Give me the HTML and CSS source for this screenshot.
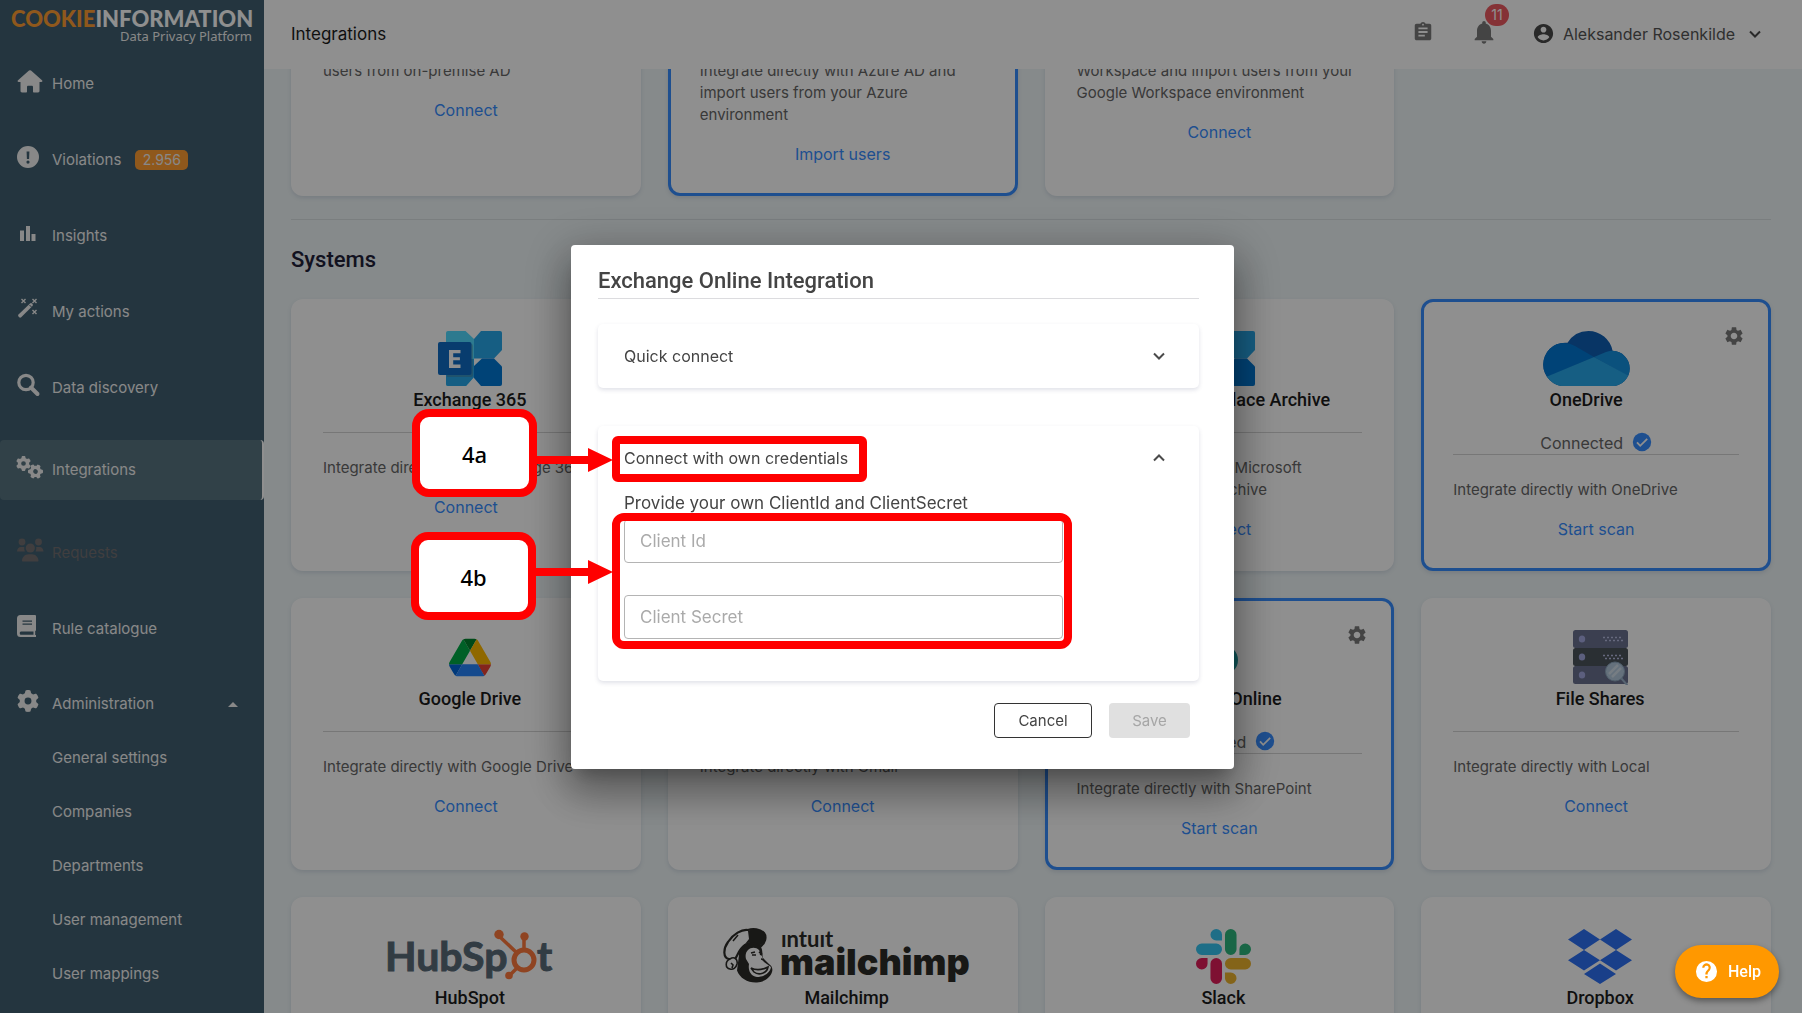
FILE: index.html
```html
<!DOCTYPE html>
<html lang="en">
<head>
<meta charset="utf-8">
<meta name="viewport" content="width=device-width, initial-scale=1">
<title>Integrations - Data Privacy Platform</title>
<link rel="stylesheet" href="styles.css">
</head>
<body>
<svg class="sprite" aria-hidden="true">
  <symbol id="i-gear" viewBox="0 0 512 512"><path d="M495.9 166.6c3.2 8.7 .5 18.4-6.4 24.6l-43.3 39.4c1.1 8.3 1.7 16.8 1.7 25.4s-.6 17.1-1.7 25.4l43.3 39.4c6.9 6.2 9.6 15.9 6.4 24.6c-4.4 11.9-9.7 23.3-15.8 34.3l-4.7 8.1c-6.6 11-14 21.4-22.1 31.2c-5.9 7.2-15.7 9.6-24.5 6.8l-55.7-17.7c-13.4 10.3-28.2 18.9-44 25.4l-12.5 57.1c-2 9.1-9 16.3-18.2 17.8c-13.8 2.3-28 3.5-42.5 3.5s-28.7-1.2-42.5-3.5c-9.2-1.5-16.2-8.7-18.2-17.8l-12.5-57.1c-15.8-6.5-30.6-15.1-44-25.4L83.1 425.9c-8.8 2.8-18.6 .3-24.5-6.8c-8.1-9.8-15.5-20.2-22.1-31.2l-4.7-8.1c-6.1-11-11.4-22.4-15.8-34.3c-3.2-8.7-.5-18.4 6.4-24.6l43.3-39.4C64.6 273.1 64 264.6 64 256s.6-17.1 1.7-25.4L22.4 191.2c-6.9-6.2-9.6-15.9-6.4-24.6c4.4-11.9 9.7-23.3 15.8-34.3l4.7-8.1c6.6-11 14-21.4 22.1-31.2c5.9-7.2 15.7-9.6 24.5-6.8l55.7 17.7c13.4-10.3 28.2-18.9 44-25.4l12.5-57.1c2-9.1 9-16.3 18.2-17.8C227.3 1.2 241.5 0 256 0s28.7 1.2 42.5 3.5c9.2 1.5 16.2 8.7 18.2 17.8l12.5 57.1c15.8 6.5 30.6 15.1 44 25.4l55.7-17.7c8.8-2.8 18.6-.3 24.5 6.8c8.1 9.8 15.5 20.2 22.1 31.2l4.7 8.1c6.1 11 11.4 22.4 15.8 34.3zM256 336a80 80 0 1 0 0-160 80 80 0 1 0 0 160z"/></symbol>
  <symbol id="i-settings" viewBox="0 0 24 24"><path d="M19.14 12.94c.04-.3.06-.61.06-.94 0-.32-.02-.64-.07-.94l2.03-1.58c.18-.14.23-.41.12-.61l-1.92-3.32c-.12-.22-.37-.29-.59-.22l-2.39.96c-.5-.38-1.03-.7-1.62-.94l-.36-2.54c-.04-.24-.24-.41-.48-.41h-3.84c-.24 0-.43.17-.47.41l-.36 2.54c-.59.24-1.13.57-1.62.94l-2.39-.96c-.22-.08-.47 0-.59.22L2.74 8.87c-.12.21-.08.47.12.61l2.03 1.58c-.05.3-.09.63-.09.94s.02.64.07.94l-2.03 1.58c-.18.14-.23.41-.12.61l1.92 3.32c.12.22.37.29.59.22l2.39-.96c.5.38 1.03.7 1.62.94l.36 2.54c.05.24.24.41.48.41h3.84c.24 0 .44-.17.47-.41l.36-2.54c.59-.24 1.13-.56 1.62-.94l2.39.96c.22.08.47 0 .59-.22l1.92-3.32c.12-.22.07-.47-.12-.61l-2.01-1.58zM12 15.6c-1.98 0-3.6-1.62-3.6-3.6s1.62-3.6 3.6-3.6 3.6 1.62 3.6 3.6-1.62 3.6-3.6 3.6z"/></symbol>
  <symbol id="i-check" viewBox="0 0 20 20"><circle cx="10" cy="10" r="9.2"/><path d="M5 10.4l3.2 3.4 7-7" fill="none" stroke="#fff" stroke-width="1.8"/></symbol>
  <symbol id="i-down" viewBox="0 0 14 14"><path d="M2 4.500l5 5 5-5" fill="none" stroke="currentColor" stroke-width="2"/></symbol>
  <symbol id="i-up" viewBox="0 0 14 14"><path d="M2 9.500l5-5 5 5" fill="none" stroke="currentColor" stroke-width="2"/></symbol>
  <symbol id="i-exchange" viewBox="0 0 64 55">
    <path d="M10 0h17.500L36 8v38l-8 9H10a2 2 0 0 1-2-2V2a2 2 0 0 1 2-2z" fill="#50d9ff"/>
    <path d="M8 28h28v18l-8 9H10a2 2 0 0 1-2-2z" fill="#28a8ea"/>
    <path d="M43 0h19a2 2 0 0 1 2 2v17l-8 8.500H36V8z" fill="#28a8ea"/>
    <path d="M44 27.500h12l8 8V53a2 2 0 0 1-2 2H43l-7-8V35z" fill="#0078d4"/>
    <path d="M9 13h24a2 2 0 0 1 2 2v29a2 2 0 0 1-2 2H9z" opacity=".3"/>
    <rect y="11" width="33.500" height="33" rx="2" fill="#0f6cc4"/>
    <path d="M11 19h11.500v3.200h-7.300v4h6.700v3h-6.700v4.400h7.300V37H11z" fill="#fff"/>
  </symbol>
</svg>

<div class="app">
  <nav class="sidebar" aria-label="Main">
    <div class="brand">
      <div class="brand-name"><span class="brand-accent">COOKIE</span>INFORMATION</div>
      <div class="brand-sub">Data Privacy Platform</div>
    </div>
    <a class="nav-item" href="#"><svg class="nav-icon" viewBox="0 0 26 24"><path d="M13 1.200a1.500 1.500 0 0 1 1 .4L25 11.300c.8.8.4 1.700-.7 1.700H22.500v9c0 .8-.6 1.400-1.400 1.400H17c-.6 0-1-.4-1-1V18c0-.8-.6-1.300-1.300-1.300h-3.400c-.7 0-1.300.5-1.300 1.300v4.400c0 .6-.4 1-1 1H5c-.9 0-1.500-.6-1.500-1.400v-9H1.700c-1.100 0-1.500-.9-.7-1.700L12 1.600a1.500 1.500 0 0 1 1-.4z"/></svg>Home</a>
    <a class="nav-item" href="#"><svg class="nav-icon" viewBox="0 0 26 24"><path d="M11 1a11 11 0 1 0 0 22 11 11 0 0 0 0-22zM9.600 6.500h2.800l-.3 7.500H9.900zM11 15.500a1.600 1.600 0 1 1 0 3.200 1.600 1.600 0 0 1 0-3.200z"/></svg>Violations<span class="count">2.956</span></a>
    <a class="nav-item" href="#"><svg class="nav-icon" viewBox="0 0 26 24"><path d="M3 9.500h4V20H3zM9 5h4v15H9zM14.500 13h4v7h-4z"/></svg>Insights</a>
    <a class="nav-item" href="#"><svg class="nav-icon" viewBox="0 0 26 24"><path d="M13 6.500a1.500 1.500 0 0 1 2 0l.5.500a1.500 1.500 0 0 1 0 2L4.200 20.300a1.500 1.500 0 0 1-2 0l-.7-.7a1.500 1.500 0 0 1 0-2z"/><path d="M12.500 8l2 2" stroke="#405f70" stroke-width="1"/><path d="M4.500 2l4 4m0-4l-4 4m11-4l4 4m0-4l-4 4m0 7l4 4m0-4l-4 4" stroke="currentColor" stroke-width="1.400"/></svg>My actions</a>
    <a class="nav-item" href="#"><svg class="nav-icon" viewBox="0 0 26 24"><circle cx="9" cy="9.500" r="7.200" fill="none" stroke="currentColor" stroke-width="3.200"/><path d="M14 14.500l6.500 6.500" stroke="currentColor" stroke-width="4" stroke-linecap="round"/></svg>Data discovery</a>
    <a class="nav-item active" href="#" aria-current="page"><svg class="nav-icon" viewBox="0 0 26 24"><use href="#i-gear" x="-1" y="1" width="15" height="15"/><use href="#i-gear" x="11" y="9" width="15" height="15" transform="rotate(30 18.500 16.500)"/></svg>Integrations</a>
    <a class="nav-item muted" href="#"><svg class="nav-icon" viewBox="0 0 26 24"><circle cx="5" cy="4" r="3.400"/><circle cx="21.500" cy="4" r="3.400"/><circle cx="13.300" cy="10" r="4.600"/><path d="M0 13.500c0-2.500 1.800-4.500 4-4.500h3.300a7 7 0 0 0 .6 4.500zM26.500 13.500c0-2.500-1.800-4.500-4-4.500h-3.300a7 7 0 0 1-.6 4.500zM5 23c0-4 3-6.800 6.500-6.800H15c3.500 0 6.500 2.800 6.500 6.800 0 .3-.4.500-.7.500H5.700c-.4 0-.7-.2-.7-.5z"/></svg>Requests</a>
    <a class="nav-item" href="#"><svg class="nav-icon" viewBox="0 0 26 24"><path d="M3.500 1H18a1 1 0 0 1 1 1v14a1 1 0 0 1-.8 1v4H19v2H3.500A3.500 3.500 0 0 1 0 19.500v-15A3.500 3.500 0 0 1 3.500 1zM4 17.500c-1.600 0-1.600 3.300 0 3.300h12.500v-3.300zM5.500 6.500v1.200H15V6.500zm0 3v1.200H15V9.500z" fill-rule="evenodd"/></svg>Rule catalogue</a>
    <a class="nav-item admin" href="#" aria-expanded="true"><svg class="nav-icon" viewBox="0 0 26 24"><use href="#i-gear" x="0" y="1" width="22" height="22"/></svg>Administration<svg class="caret" viewBox="0 0 10 5"><path d="M0 5l5-5 5 5z"/></svg></a>
    <a class="nav-item sub" href="#">General settings</a>
    <a class="nav-item sub" href="#">Companies</a>
    <a class="nav-item sub" href="#">Departments</a>
    <a class="nav-item sub" href="#">User management</a>
    <a class="nav-item sub" href="#">User mappings</a>
  </nav>

  <div class="page">
    <header class="topbar">
      <h1 class="page-title">Integrations</h1>
      <button class="icon-button" type="button" aria-label="Tasks"><svg class="icon-tasks" viewBox="0 0 24 24"><path d="M19 3h-4.180C14.400 1.840 13.300 1 12 1c-1.300 0-2.400.84-2.820 2H5c-1.100 0-2 .9-2 2v14c0 1.100.9 2 2 2h14c1.100 0 2-.9 2-2V5c0-1.100-.9-2-2-2zm-7 0c.55 0 1 .45 1 1s-.45 1-1 1-1-.45-1-1 .45-1 1-1zm2 14H7v-2h7v2zm3-4H7v-2h10v2zm0-4H7V7h10v2z"/></svg></button>
      <button class="icon-button bell" type="button" aria-label="Notifications"><svg class="icon-bell" viewBox="0 0 24 24"><path d="M12 22c1.100 0 2-.9 2-2h-4c0 1.100.89 2 2 2zm6-6v-5c0-3.070-1.640-5.640-4.500-6.320V4c0-.83-.67-1.500-1.500-1.500s-1.500.67-1.500 1.500v.68C7.630 5.360 6 7.920 6 11v5l-2 2v1h16v-1l-2-2z"/></svg><span class="bell-count">11</span></button>
      <button class="user" type="button"><svg class="icon-user" viewBox="0 0 24 24"><path d="M12 2C6.480 2 2 6.480 2 12s4.480 10 10 10 10-4.480 10-10S17.520 2 12 2zm0 3c1.660 0 3 1.340 3 3s-1.340 3-3 3-3-1.340-3-3 1.340-3 3-3zm0 14.200c-2.500 0-4.710-1.280-6-3.220.03-1.990 4-3.080 6-3.080 1.990 0 5.970 1.090 6 3.080-1.290 1.940-3.500 3.220-6 3.220z"/></svg>Aleksander Rosenkilde<svg class="chevron"><use href="#i-down"/></svg></button>
    </header>

    <main class="content">
      <div class="scrolled">
        <section class="grid">
          <article class="card">
            <div class="card-head"><div class="card-id"><svg class="logo-sm" viewBox="0 0 38 38"><path d="M19 2l16 17-16 17L3 19z" fill="#0078d4"/></svg><h3 class="card-title">Local AD</h3></div></div>
            <p class="desc">Integrate with local AD and import<br>users from on-premise AD</p><a class="action" href="#">Connect</a>
          </article>
          <article class="card connected">
            <div class="card-head"><div class="card-id"><svg class="logo-sm" viewBox="0 0 38 38"><path d="M19 2l16 17-16 17L3 19z" fill="#28a8ea"/></svg><h3 class="card-title">Azure AD</h3></div><svg class="card-gear"><use href="#i-settings"/></svg></div>
            <div class="status">Connected<svg class="check"><use href="#i-check"/></svg></div>
            <p class="desc">Integrate directly with Azure AD and import users from your Azure environment</p><a class="action" href="#">Import users</a>
          </article>
          <article class="card">
            <div class="card-head"><div class="card-id"><svg class="logo-sm" viewBox="0 0 38 38"><circle cx="19" cy="19" r="14" fill="none" stroke="#2684fc" stroke-width="6"/></svg><h3 class="card-title">Google Workspace</h3></div></div>
            <p class="desc">Integrate with your Google<br>Workspace and import users from your Google Workspace environment</p><a class="action" href="#">Connect</a>
          </article>
        </section>

        <hr class="rule">
        <h2 class="section-title">Systems</h2>

        <section class="grid">
          <article class="card">
            <div class="card-head"><div class="card-id"><svg class="logo-exchange"><use href="#i-exchange"/></svg><h3 class="card-title">Exchange 365</h3></div></div>
            <p class="desc">Integrate directly with Exchange 365</p><a class="action" href="#">Connect</a>
          </article>
          <article class="card">
            <div class="card-head"><div class="card-id"><svg class="logo-exchange"><use href="#i-exchange"/></svg><h3 class="card-title">Exchange Online</h3></div></div>
            <p class="desc">Integrate directly with Exchange</p><a class="action" href="#">Connect</a>
          </article>
          <article class="card">
            <div class="card-head"><div class="card-id"><svg class="logo-exchange"><use href="#i-exchange"/></svg><h3 class="card-title">Exchange In-Place Archive</h3></div></div>
            <p class="desc">Integrate directly with Microsoft<br>Exchange In-Place Archive</p><a class="action" href="#">Connect</a>
          </article>
          <article class="card connected">
            <div class="card-head"><div class="card-id">
              <svg class="logo-onedrive" viewBox="0 0 87 55"><clipPath id="cloud"><circle cx="45.500" cy="24.500" r="24.500"/><circle cx="22" cy="33.500" r="21.800"/><circle cx="69" cy="37.500" r="17.700"/><path d="M22 30h47v25.200H22z"/></clipPath><g clip-path="url(#cloud)"><path d="M0 0h87v55H0z" fill="#0f5fb4"/><path d="M-1 12h22q6 0 11 3l19 11L4 46l-5 4z" fill="#0078d4"/><path d="M51 26l12-5q3-1.500 8-1.500h17v27z" fill="#1490df"/><path d="M3 46l48-20 37 20v10H0z" fill="#28a8ea"/></g></svg>
              <h3 class="card-title">OneDrive</h3></div><svg class="card-gear"><use href="#i-settings"/></svg></div>
            <div class="status">Connected<svg class="check"><use href="#i-check"/></svg></div>
            <p class="desc">Integrate directly with OneDrive</p><a class="action" href="#">Start scan</a>
          </article>

          <article class="card">
            <div class="card-head"><div class="card-id">
              <svg class="logo-sm" viewBox="0 0 87.300 78"><path d="m6.600 66.850 3.850 6.650c.8 1.400 1.950 2.500 3.300 3.300l13.750-23.800h-27.500c0 1.550.4 3.100 1.200 4.500z" fill="#0066da"/><path d="m43.650 25-13.750-23.800c-1.350.8-2.500 1.900-3.300 3.300l-25.400 44a9.060 9.060 0 0 0-1.200 4.500h27.500z" fill="#00ac47"/><path d="m73.550 76.800c1.350-.8 2.500-1.900 3.300-3.300l1.600-2.750 7.650-13.250c.8-1.400 1.200-2.950 1.200-4.500h-27.502l5.852 11.500z" fill="#ea4335"/><path d="m43.650 25 13.750-23.800c-1.350-.8-2.900-1.200-4.500-1.200h-18.500c-1.600 0-3.150.45-4.500 1.200z" fill="#00832d"/><path d="m59.800 53h-32.300l-13.750 23.800c1.350.8 2.900 1.200 4.500 1.200h50.800c1.600 0 3.150-.45 4.500-1.200z" fill="#2684fc"/><path d="m73.400 26.500-12.700-22c-.8-1.400-1.950-2.500-3.300-3.300l-13.750 23.800 16.150 28h27.450c0-1.550-.4-3.100-1.200-4.500z" fill="#ffba00"/></svg>
              <h3 class="card-title">Google Drive</h3></div></div>
            <p class="desc">Integrate directly with Google Drive</p><a class="action" href="#">Connect</a>
          </article>
          <article class="card">
            <div class="card-head"><div class="card-id"><svg class="logo-sm" viewBox="0 0 42 38"><path d="M2 6l19 15L40 6v28H2z" fill="#ea4335"/></svg><h3 class="card-title">Gmail</h3></div></div>
            <p class="desc">Integrate directly with Gmail</p><a class="action" href="#">Connect</a>
          </article>
          <article class="card connected">
            <div class="card-head"><div class="card-id"><svg class="logo-exchange" viewBox="0 0 64 55"><circle cx="32" cy="16" r="16" fill="#036c70"/><circle cx="46" cy="30" r="15" fill="#1a9ba1"/><circle cx="34" cy="43" r="12" fill="#37c6d0"/></svg><h3 class="card-title">SharePoint Online</h3></div><svg class="card-gear"><use href="#i-settings"/></svg></div>
            <div class="status">Connected<svg class="check"><use href="#i-check"/></svg></div>
            <p class="desc">Integrate directly with SharePoint</p><a class="action" href="#">Start scan</a>
          </article>
          <article class="card">
            <div class="card-head"><div class="card-id">
              <svg class="logo-square" viewBox="0 0 55 55"><rect y="0" width="55" height="18" rx="2.500" fill="#69718f"/><rect y="18" width="55" height="18" rx="2.500" fill="#4b555c"/><rect y="36" width="55" height="18" rx="2.500" fill="#69718f"/><g fill="#a4a9e0"><ellipse cx="9" cy="9" rx="3.200" ry="3.500"/><ellipse cx="9" cy="27" rx="3.200" ry="3.500"/><ellipse cx="9" cy="45" rx="3.200" ry="3.500"/></g><path d="M30 7.500h19M32 10.500h19M30 25.500h19M32 28.500h19" stroke="#b6bbe0" stroke-width="1.500" stroke-dasharray="2 2"/><path d="M48 48l7 8" stroke="#9db4cc" stroke-width="2"/><circle cx="42" cy="41.500" r="9.500" fill="#b4cade" stroke="#8ea7bd"/><path d="M36 44l9-9M39 47l9-9" stroke="#d2dfea" stroke-width="2.500"/></svg>
              <h3 class="card-title">File Shares</h3></div></div>
            <p class="desc">Integrate directly with Local</p><a class="action" href="#">Connect</a>
          </article>

          <article class="card">
            <div class="card-head"><div class="card-id">
              <svg class="logo-hubspot" viewBox="0 0 166 55"><text class="hub-text" x="-2" y="42">HubSp</text><text class="hub-text" x="150" y="42">t</text><g fill="none" stroke="#ff7a3d"><circle cx="137" cy="31" r="10" stroke-width="5"/><path d="M137 22V9M130 24L112 7M130 39l-8 8" stroke-width="3.500"/></g><g fill="#ff7a3d"><circle cx="112" cy="5.500" r="4.700"/><circle cx="137.500" cy="7.500" r="4.200"/><circle cx="122" cy="46.500" r="3.800"/></g></svg>
              <h3 class="card-title">HubSpot</h3></div></div>
            <p class="desc">Integrate directly with HubSpot</p><a class="action" href="#">Connect</a>
          </article>
          <article class="card">
            <div class="card-head"><div class="card-id">
              <svg class="logo-mailchimp" viewBox="0 0 250 55"><path d="M17 26c-1-6 3-12 9-14 6-1.500 11 1 13 6 2 4 1 7 2 11l6 6c3 2 4 5 3 8-2 6-8 10-15 10.500-9 .5-17-4-20-12z" fill="#2c2b28"/><path d="M26 21c3-3 8-3 11 0l3 6 2 6 7 5c-1 6-7 10-14 10-7-1-9-7-8-13l-3-5c-1-4 0-7 2-9z" fill="#fff"/><path d="M7 30C1 29 1 20 6 13 11 5 20 0 26 1c5-2 12-1 16 3 3 4 1 10-3 13-4-4-11-4-16-1-6 4-7 10-10 14z" fill="#fff" stroke="#2c2b28" stroke-width="2.200"/><path d="M26 2c6-3 14-1 17 3 2 5-1 10-5 11-5-4-11-3-15-1l4-5z" fill="#2c2b28"/><path d="M8 30c4-3 8 0 7 5-1 4-4 6-7 5-5-1-5-8 0-10zm1 4l2 2-1 3M29 24l4-1m4 0l3 2M39 30c2 0 3 1 2 2M29 39c6 3 13 1 17-1-1 6-9 9-14 5z" fill="#fff" stroke="#2c2b28" stroke-width="1.600"/><path d="M30 26h4m4-1l2 1M11 12l5-6" stroke="#2c2b28" stroke-width="1.500"/><text class="intuit-text" x="59" y="18">ıntuıt</text><text class="chimp-text" x="58" y="46">mailchimp</text></svg>
              <h3 class="card-title">Mailchimp</h3></div></div>
            <p class="desc">Integrate directly with Mailchimp</p><a class="action" href="#">Connect</a>
          </article>
          <article class="card">
            <div class="card-head"><div class="card-id">
              <svg class="logo-square" viewBox="0 0 24 24"><path fill="#e01e5a" d="M5.042 15.165a2.528 2.528 0 0 1-2.520 2.523A2.528 2.528 0 0 1 0 15.165a2.527 2.527 0 0 1 2.522-2.520h2.520v2.520zM6.313 15.165a2.527 2.527 0 0 1 2.521-2.520 2.527 2.527 0 0 1 2.521 2.520v6.313A2.528 2.528 0 0 1 8.834 24a2.528 2.528 0 0 1-2.521-2.522v-6.313z"/><path fill="#36c5f0" d="M8.834 5.042a2.528 2.528 0 0 1-2.521-2.520A2.528 2.528 0 0 1 8.834 0a2.528 2.528 0 0 1 2.521 2.522v2.520H8.834zM8.834 6.313a2.528 2.528 0 0 1 2.521 2.521 2.528 2.528 0 0 1-2.521 2.521H2.522A2.528 2.528 0 0 1 0 8.834a2.528 2.528 0 0 1 2.522-2.521h6.312z"/><path fill="#2eb67d" d="M18.956 8.834a2.528 2.528 0 0 1 2.522-2.521A2.528 2.528 0 0 1 24 8.834a2.528 2.528 0 0 1-2.522 2.521h-2.522V8.834zM17.688 8.834a2.528 2.528 0 0 1-2.523 2.521 2.527 2.527 0 0 1-2.520-2.521V2.522A2.527 2.527 0 0 1 15.165 0a2.528 2.528 0 0 1 2.523 2.522v6.312z"/><path fill="#ecb22e" d="M15.165 18.956a2.528 2.528 0 0 1 2.523 2.522A2.528 2.528 0 0 1 15.165 24a2.527 2.527 0 0 1-2.520-2.522v-2.522h2.520zM15.165 17.688a2.527 2.527 0 0 1-2.520-2.523 2.526 2.526 0 0 1 2.520-2.520h6.313A2.527 2.527 0 0 1 24 15.165a2.528 2.528 0 0 1-2.522 2.523h-6.313z"/></svg>
              <h3 class="card-title">Slack</h3></div></div>
            <p class="desc">Integrate directly with Slack</p><a class="action" href="#">Connect</a>
          </article>
          <article class="card">
            <div class="card-head"><div class="card-id">
              <svg class="logo-exchange" viewBox="0 0 64 55"><path d="M16 0l16 10.500L16 21 0 10.500zM48 0l16 10.500L48 21 32 10.500zM16 21l16 10.200L16 41.500 0 31.200zM48 21l16 10.200-16 10.300-16-10.300zM32 34.500L48 45 32 55 16 45z" fill="#2d71f5"/></svg>
              <h3 class="card-title">Dropbox</h3></div></div>
            <p class="desc">Integrate directly with Dropbox</p><a class="action" href="#">Connect</a>
          </article>
        </section>
      </div>
    </main>
  </div>
</div>

<div class="backdrop">
  <div class="modal" role="dialog" aria-modal="true" aria-labelledby="dialog-title">
    <h2 class="modal-title" id="dialog-title">Exchange Online Integration</h2>
    <section class="panel">
      <button class="panel-head" type="button" aria-expanded="false">Quick connect<svg class="chevron"><use href="#i-down"/></svg></button>
    </section>
    <section class="panel">
      <button class="panel-head" type="button" aria-expanded="true">Connect with own credentials<svg class="chevron"><use href="#i-up"/></svg></button>
      <form class="panel-body" id="credentials">
        <p class="hint">Provide your own ClientId and ClientSecret</p>
        <input class="field" type="text" placeholder="Client Id" aria-label="Client Id">
        <input class="field" type="text" placeholder="Client Secret" aria-label="Client Secret">
      </form>
    </section>
    <div class="modal-actions">
      <button class="btn btn-outline" type="button">Cancel</button>
      <button class="btn btn-filled" type="submit" form="credentials" disabled>Save</button>
    </div>

    <div class="mark mark-credentials"></div>
    <div class="mark mark-fields"></div>
    <div class="callout callout-a">4a</div>
    <div class="callout callout-b">4b</div>
    <svg class="arrow arrow-a" viewBox="0 0 77 24"><path d="M0 8h52V0l25 12-25 12v-8H0z"/></svg>
    <svg class="arrow arrow-b" viewBox="0 0 77 24"><path d="M0 8h52V0l25 12-25 12v-8H0z"/></svg>
  </div>
</div>

<button class="help" type="button"><svg class="help-icon" viewBox="0 0 24 24"><path d="M12 1a11 11 0 1 0 0 22 11 11 0 0 0 0-22zm1.200 18h-2.400v-2.300h2.400zm2.400-8.300l-1 1c-.9.900-1.400 1.600-1.400 3.300h-2.400v-.6c0-1.300.5-2.400 1.400-3.300l1.300-1.400a2.200 2.200 0 1 0-3.700-1.600H7.500a4.500 4.500 0 1 1 8.100 2.600z"/></svg>Help</button>
</body>
</html>
```
FILE: styles.css
```css
* { box-sizing: border-box; }

body {
  margin: 0;
  height: 100vh;
  overflow: hidden;
  font: 16px/22px Inter, "Liberation Sans", sans-serif;
  color: #666;
}

h1, h2, h3, p { margin: 0; }
a { text-decoration: none; }
button, input { font: inherit; color: inherit; }
button { background: none; border: 0; padding: 0; }
svg { display: block; flex: none; fill: currentColor; }
.sprite { position: absolute; width: 0; height: 0; }

.app { display: flex; height: 100vh; }

/* Sidebar */
.sidebar {
  flex: none;
  width: 264px;
  font-size: 15px;
  background: #405f70;
  color: #f2f2f2;
}
.brand {
  height: 46px;
  padding: 8px 12px 0 11px;
  text-align: right;
}
.brand-name {
  font: 900 22px/22px Lato, sans-serif;
  color: #fff;
  white-space: nowrap;
}
.brand-accent { color: #ff9d33; }
.brand-sub { font: 13px/13px "Noto Sans", sans-serif; }
.nav-item {
  display: flex;
  align-items: center;
  height: 76px;
  padding-left: 17px;
  color: inherit;
}
.nav-icon {
  width: 26px;
  height: 24px;
  margin: 0 9px 6px 0;
  overflow: visible;
}
.count {
  margin-left: 14px;
  width: 53px;
  font-size: 14px;
  line-height: 20px;
  text-align: center;
  background: #ff9d33;
  border-radius: 5px;
}
.active {
  height: 60px;
  margin: 14px 0 15px;
  background: #587480;
  border-right: 2px solid #fff;
  border-radius: 4px;
}
.muted { color: #736f70; }
.admin { height: 54px; margin-top: 10px; }
.caret { width: 10px; height: 5px; margin: 0 26px 0 auto; }
.sub { height: 54px; padding-left: 52px; }

/* Top bar */
.page {
  flex: 1;
  min-width: 0;
  display: flex;
  flex-direction: column;
}
.topbar {
  flex: none;
  display: flex;
  align-items: center;
  height: 69px;
  padding: 0 40px 2px 27px;
  background: #fff;
}
.page-title {
  margin-right: auto;
  font-size: 17px;
  font-weight: 400;
  color: #1c1c1c;
}
.icon-button { margin-bottom: 4px; color: #7a7a7a; }
.icon-tasks { width: 22px; height: 22px; }
.icon-bell { width: 28px; height: 28px; }
.bell { position: relative; margin: 0 34px 4px 36px; }
.bell-count {
  position: absolute;
  left: 15px;
  top: -14px;
  width: 24px;
  font-size: 14px;
  line-height: 22px;
  color: #fff;
  background: #ee5a60;
  border-radius: 11px;
}
.user {
  display: flex;
  align-items: center;
  gap: 8px;
  color: #555;
}
.icon-user { width: 23px; height: 23px; color: #4a4a4a; }
.chevron { width: 14px; height: 14px; color: #4a4a4a; }
.user .chevron { margin-left: 5px; }

/* Content, scrolled down past the first headings */
.content {
  flex: 1;
  min-height: 0;
  overflow: hidden;
  background: #eff6f8;
}
.scrolled {
  margin-top: -189px;
  padding: 0 31px 27px 27px;
}
.grid {
  display: grid;
  grid-template-columns: repeat(4, 1fr);
  gap: 27px;
}
.rule {
  height: 1px;
  margin: 23px 0 27px;
  border: 0;
  background: #d9e0e3;
}
.section-title {
  margin-bottom: 26px;
  font: 500 22px/26px Roboto, sans-serif;
  color: #1f2038;
}
.card {
  display: flex;
  flex-direction: column;
  padding: 29px 29px 28px;
  background: #fff;
  border: 3px solid transparent;
  border-radius: 12px;
  background-clip: border-box;
  box-shadow: 0 2px 4px rgba(60, 90, 130, .15);
}
.connected { border-color: #378dff; }
.card-head {
  display: flex;
  padding: 0 0 18px 8px;
  border-bottom: 1px solid #d4d4d4;
}
.connected .card-head { border-bottom: 0; }
.card-id { flex: 1; text-align: center; }
.card-id svg { margin: 0 auto; }
.card-title {
  font: 500 18px/28px Roboto, sans-serif;
  color: #1c1c1c;
}
.card-gear {
  width: 22px;
  height: 22px;
  margin: -6px -6px 0 12px;
  color: #7a7a7a;
}
.logo-exchange { width: 64px; height: 55px; }
.logo-square { width: 55px; height: 55px; }
.logo-onedrive { width: 87px; height: 55px; }
.logo-sm { width: 42px; height: 55px; }
.logo-hubspot { width: 166px; height: 55px; overflow: visible; }
.logo-mailchimp { width: 250px; height: 55px; overflow: visible; }
.hub-text { font: 700 41px Lato, sans-serif; fill: #5a6b78; stroke: #5a6b78; }
.intuit-text { font: 700 22px Lato, sans-serif; fill: #2c2b28; }
.chimp-text { font: 900 36px Inter, sans-serif; fill: #2c2b28; }
.status {
  display: flex;
  justify-content: center;
  gap: 9px;
  border-bottom: 1px solid #d4d4d4;
}
.check { width: 20px; height: 20px; color: #378dff; }
.desc { margin: 24px 0 17px; font-size: 15px; }
.action {
  align-self: center;
  color: #378dff;
}

/* Dialog */
.backdrop {
  position: fixed;
  inset: 0;
  display: flex;
  align-items: center;
  justify-content: center;
  padding-left: 3px;
  background: rgba(0, 0, 0, .44);
}
.modal {
  position: relative;
  width: 663px;
  padding: 22px 35px 31px 27px;
  color: #444;
  background: #fff;
  border-radius: 4px;
  box-shadow: 0 11px 15px -7px rgba(0, 0, 0, .2), 0 24px 38px 3px rgba(0, 0, 0, .24), 0 9px 46px 8px rgba(0, 0, 0, .22);
}
.modal-title {
  padding-bottom: 3px;
  border-bottom: 1px solid #dcdcdf;
  font: 500 22px/28px Roboto, sans-serif;
}
.panel {
  margin-top: 25px;
  border-radius: 5px;
  box-shadow: 0 2px 4px rgba(60, 70, 110, .16);
}
.panel + .panel { margin-top: 38px; }
.panel-head {
  display: flex;
  align-items: center;
  justify-content: space-between;
  width: 100%;
  height: 64px;
  padding: 0 33px 0 26px;
}
.panel-body {
  display: flex;
  flex-direction: column;
  padding: 2px 136px 42px 26px;
  font-size: 17px;
}
.hint { margin-bottom: 5px; }
.field {
  height: 44px;
  padding: 0 15px;
  background: none;
  border: 1px solid #b4b4b4;
  border-radius: 4px;
}
.field + .field { margin-top: 32px; }
.field::placeholder { color: #aaa; opacity: 1; }
.modal-actions {
  display: flex;
  justify-content: flex-end;
  gap: 17px;
  margin-top: 22px;
  padding-right: 9px;
}
.btn {
  height: 35px;
  padding-top: 2px;
  font-size: 15px;
  border-radius: 4px;
}
.btn-outline { width: 98px; border: 1px solid #333; }
.btn-filled { width: 81px; color: #a6a6a6; background: #e0e0e0; }

/* Step annotations laid over the dialog */
.mark, .callout { position: absolute; border: 8px solid #f00; }
.mark-credentials {
  left: 41px;
  top: 191px;
  width: 255px;
  height: 46px;
  border-radius: 6px;
}
.mark-fields {
  left: 41px;
  top: 268px;
  width: 460px;
  height: 136px;
  border-radius: 12px;
}
.callout {
  width: 125px;
  height: 88px;
  font: 500 22px/74px "Noto Sans", sans-serif;
  text-align: center;
  color: #000;
  background: #fff;
  border-radius: 17px;
}
.callout-a { left: -159px; top: 164px; }
.callout-b { left: -160px; top: 287px; }
.arrow { position: absolute; left: -35px; width: 77px; height: 24px; fill: #f00; }
.arrow-a { top: 203px; }
.arrow-b { top: 315px; }

.help {
  position: fixed;
  right: 23px;
  bottom: 15px;
  display: flex;
  align-items: center;
  gap: 10px;
  height: 53px;
  padding: 0 18px 0 20px;
  font: 500 16px/22px Roboto, sans-serif;
  color: #fff;
  background: #ff9800;
  border-radius: 27px;
  box-shadow: 0 3px 6px rgba(0, 0, 0, .4);
}
.help-icon { width: 23px; height: 23px; }
```
